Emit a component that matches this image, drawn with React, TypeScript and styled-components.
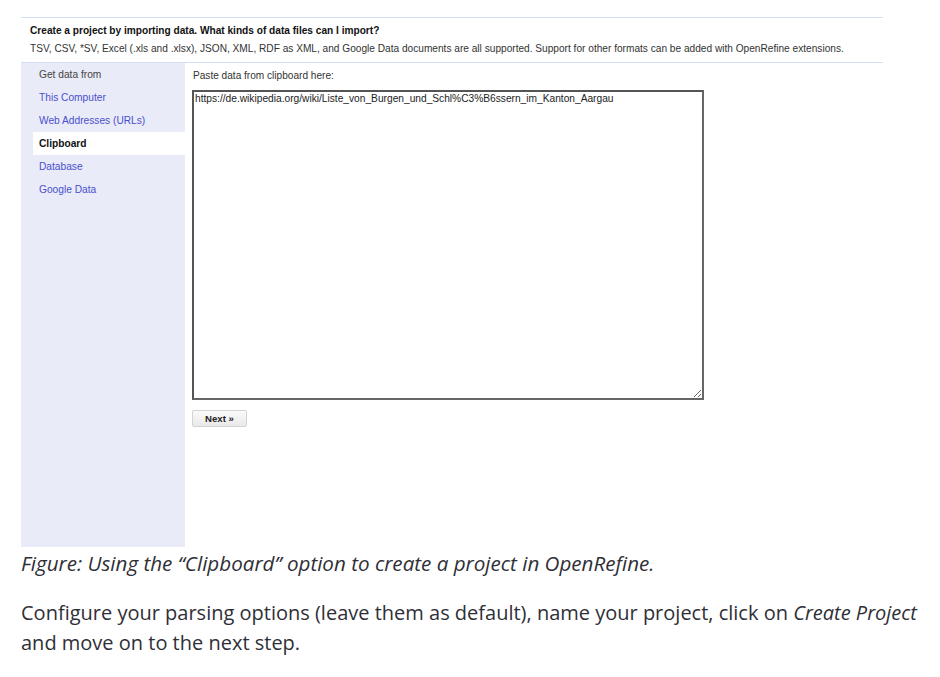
import React from "react";
import styled, { createGlobalStyle } from "styled-components";

const Global = createGlobalStyle`
  html, body { margin: 0; padding: 0; background: #fff; }
  body { font-family: "Liberation Sans", Arial, sans-serif; }
`;

const Page = styled.div`
  padding: 17px 0 0 21px;
  width: 919px;
`;

const Shot = styled.div`
  width: 862px;
  border-top: 1px solid #d4def4;
  font-family: "Liberation Sans", Arial, sans-serif;
  color: #222;
`;

const Header = styled.div`
  padding: 4px 9px 4px;
  border-bottom: 1px solid #d4def4;
  font-size: 10.15px;
  line-height: 18px;
  white-space: nowrap;
`;

const Title = styled.div`
  font-weight: bold;
  color: #111;
`;

const Sub = styled.div`
  color: #333;
`;

const Body = styled.div`
  display: flex;
  height: 484px;
`;

const Sidebar = styled.div`
  width: 164px;
  background: #e9ebf8;
  display: flex;
  flex-direction: column;
`;

const NavItem = styled.div<{ $kind: "label" | "link" | "active" }>`
  height: 23px;
  line-height: 24px;
  font-size: 10.2px;
  padding-left: ${(p) => (p.$kind === "active" ? "6px" : "18px")};
  margin-left: ${(p) => (p.$kind === "active" ? "12px" : "0")};
  background: ${(p) => (p.$kind === "active" ? "#fff" : "transparent")};
  font-weight: ${(p) => (p.$kind === "active" ? "bold" : "normal")};
  color: ${(p) =>
    p.$kind === "active" ? "#111" : p.$kind === "label" ? "#444" : "#4a4fcf"};
`;

const Main = styled.div`
  flex: 1;
  padding: 6px 0 0 7px;
  display: flex;
  flex-direction: column;
  align-items: flex-start;
`;

const Prompt = styled.div`
  font-size: 10.1px;
  color: #333;
  line-height: 14px;
  padding-left: 1px;
  margin-bottom: 7px;
`;

const Area = styled.textarea`
  box-sizing: border-box;
  width: 512px;
  height: 310px;
  border: 2px solid #666;
  border-top-color: #555;
  border-left-color: #555;
  padding: 1px 1px;
  margin: 0;
  font-family: "Liberation Sans", Arial, sans-serif;
  font-size: 10.2px;
  line-height: 12px;
  color: #222;
  resize: both;
  outline: none;
`;

const NextButton = styled.button`
  margin-top: 10px;
  width: 55px;
  height: 17px;
  padding: 0;
  border: 1px solid #d3d3d3;
  border-radius: 2px;
  background: linear-gradient(#fafafa, #e9e9e9);
  font-family: "Liberation Sans", Arial, sans-serif;
  font-size: 9.6px;
  font-weight: bold;
  color: #222;
  text-align: center;
`;

const Caption = styled.p`
  margin: 1px 0 0;
  font-family: "Open Sans", "Noto Sans", sans-serif;
  font-style: italic;
  font-size: 20.6px;
  line-height: 30px;
  color: #2f2f37;
  white-space: nowrap;
`;

const Para = styled.p`
  margin: 20px 0 0;
  font-family: "Open Sans", "Noto Sans", sans-serif;
  font-size: 20px;
  line-height: 30px;
  color: #2f2f37;
  width: 905px;
  em { font-style: italic; }
`;

const nav: { text: string; kind: "label" | "link" | "active" }[] = [
  { text: "Get data from", kind: "label" },
  { text: "This Computer", kind: "link" },
  { text: "Web Addresses (URLs)", kind: "link" },
  { text: "Clipboard", kind: "active" },
  { text: "Database", kind: "link" },
  { text: "Google Data", kind: "link" },
];

export default function App() {
  return (
    <>
      <Global />
      <Page>
        <Shot>
          <Header>
            <Title>Create a project by importing data. What kinds of data files can I import?</Title>
            <Sub>
              TSV, CSV, *SV, Excel (.xls and .xlsx), JSON, XML, RDF as XML, and Google Data documents are all supported. Support for other formats can be added with OpenRefine extensions.
            </Sub>
          </Header>
          <Body>
            <Sidebar>
              {nav.map((n) => (
                <NavItem key={n.text} $kind={n.kind}>
                  {n.text}
                </NavItem>
              ))}
            </Sidebar>
            <Main>
              <Prompt>Paste data from clipboard here:</Prompt>
              <Area
                spellCheck={false}
                defaultValue="https://de.wikipedia.org/wiki/Liste_von_Burgen_und_Schl%C3%B6ssern_im_Kanton_Aargau"
              />
              <NextButton>Next »</NextButton>
            </Main>
          </Body>
        </Shot>
        <Caption>Figure: Using the “Clipboard” option to create a project in OpenRefine.</Caption>
        <Para>
          Configure your parsing options (leave them as default), name your project, click on <em>Create Project</em> and move on to the next step.
        </Para>
      </Page>
    </>
  );
}
